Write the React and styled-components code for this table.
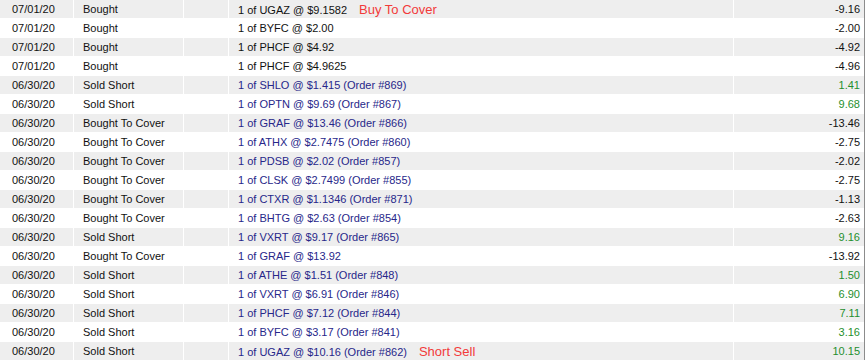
import React from 'react';
import styled, { createGlobalStyle } from 'styled-components';

const GlobalStyle = createGlobalStyle`
  html, body {
    margin: 0;
    padding: 0;
    background: #fff;
  }
  body {
    font-family: "Liberation Sans", Arial, sans-serif;
    font-size: 11px;
    color: #111;
  }
`;

const Wrapper = styled.div`
  width: 866px;
  display: flex;
`;

const Table = styled.div`
  width: 864px;
  display: flex;
  flex-direction: column;
  gap: 1px;
  border-right: 1px solid #8c8c8c;
`;

const Row = styled.div`
  display: grid;
  grid-template-columns: 73px 109px 44px 504px 1fr;
  gap: 1px;
  height: 18px;
`;

const Cell = styled.div`
  background: ${props => (props.$shade ? '#eeeeee' : '#ffffff')};
  line-height: 19px;
  padding: 0 ${props => (props.$right ? '4px' : '0')} 0 ${props => props.$pad || '9px'};
  text-align: ${props => (props.$right ? 'right' : 'left')};
  white-space: nowrap;
  overflow: hidden;
  color: ${props => props.$color || '#111'};
`;

const Note = styled.span`
  color: #f23a3a;
  font-size: 13px;
  margin-left: 12px;
`;

const trades = [
  { date: '07/01/20', type: 'Bought', desc: '1 of UGAZ @ $9.1582', amount: '-9.16', note: 'Buy To Cover' },
  { date: '07/01/20', type: 'Bought', desc: '1 of BYFC @ $2.00', amount: '-2.00' },
  { date: '07/01/20', type: 'Bought', desc: '1 of PHCF @ $4.92', amount: '-4.92' },
  { date: '07/01/20', type: 'Bought', desc: '1 of PHCF @ $4.9625', amount: '-4.96' },
  { date: '06/30/20', type: 'Sold Short', desc: '1 of SHLO @ $1.415 (Order #869)', amount: '1.41', order: true },
  { date: '06/30/20', type: 'Sold Short', desc: '1 of OPTN @ $9.69 (Order #867)', amount: '9.68', order: true },
  { date: '06/30/20', type: 'Bought To Cover', desc: '1 of GRAF @ $13.46 (Order #866)', amount: '-13.46', order: true },
  { date: '06/30/20', type: 'Bought To Cover', desc: '1 of ATHX @ $2.7475 (Order #860)', amount: '-2.75', order: true },
  { date: '06/30/20', type: 'Bought To Cover', desc: '1 of PDSB @ $2.02 (Order #857)', amount: '-2.02', order: true },
  { date: '06/30/20', type: 'Bought To Cover', desc: '1 of CLSK @ $2.7499 (Order #855)', amount: '-2.75', order: true },
  { date: '06/30/20', type: 'Bought To Cover', desc: '1 of CTXR @ $1.1346 (Order #871)', amount: '-1.13', order: true },
  { date: '06/30/20', type: 'Bought To Cover', desc: '1 of BHTG @ $2.63 (Order #854)', amount: '-2.63', order: true },
  { date: '06/30/20', type: 'Sold Short', desc: '1 of VXRT @ $9.17 (Order #865)', amount: '9.16', order: true },
  { date: '06/30/20', type: 'Bought To Cover', desc: '1 of GRAF @ $13.92', amount: '-13.92', order: true },
  { date: '06/30/20', type: 'Sold Short', desc: '1 of ATHE @ $1.51 (Order #848)', amount: '1.50', order: true },
  { date: '06/30/20', type: 'Sold Short', desc: '1 of VXRT @ $6.91 (Order #846)', amount: '6.90', order: true },
  { date: '06/30/20', type: 'Sold Short', desc: '1 of PHCF @ $7.12 (Order #844)', amount: '7.11', order: true },
  { date: '06/30/20', type: 'Sold Short', desc: '1 of BYFC @ $3.17 (Order #841)', amount: '3.16', order: true },
  { date: '06/30/20', type: 'Sold Short', desc: '1 of UGAZ @ $10.16 (Order #862)', amount: '10.15', order: true, note: 'Short Sell' },
];

const App = () => (
  <>
    <GlobalStyle />
    <Wrapper>
      <Table>
        {trades.map((t, i) => {
          const shade = i % 2 === 0;
          const positive = !t.amount.startsWith('-');
          return (
            <Row key={i}>
              <Cell $shade={shade} $pad="12px">{t.date}</Cell>
              <Cell $shade={shade}>{t.type}</Cell>
              <Cell $shade={shade} />
              <Cell $shade={shade} $color={t.order ? '#27278a' : '#111'}>
                {t.desc}
                {t.note && <Note>{t.note}</Note>}
              </Cell>
              <Cell $shade={shade} $right $color={positive ? '#1f8f2e' : '#111'}>
                {t.amount}
              </Cell>
            </Row>
          );
        })}
      </Table>
    </Wrapper>
  </>
);

export default App;
